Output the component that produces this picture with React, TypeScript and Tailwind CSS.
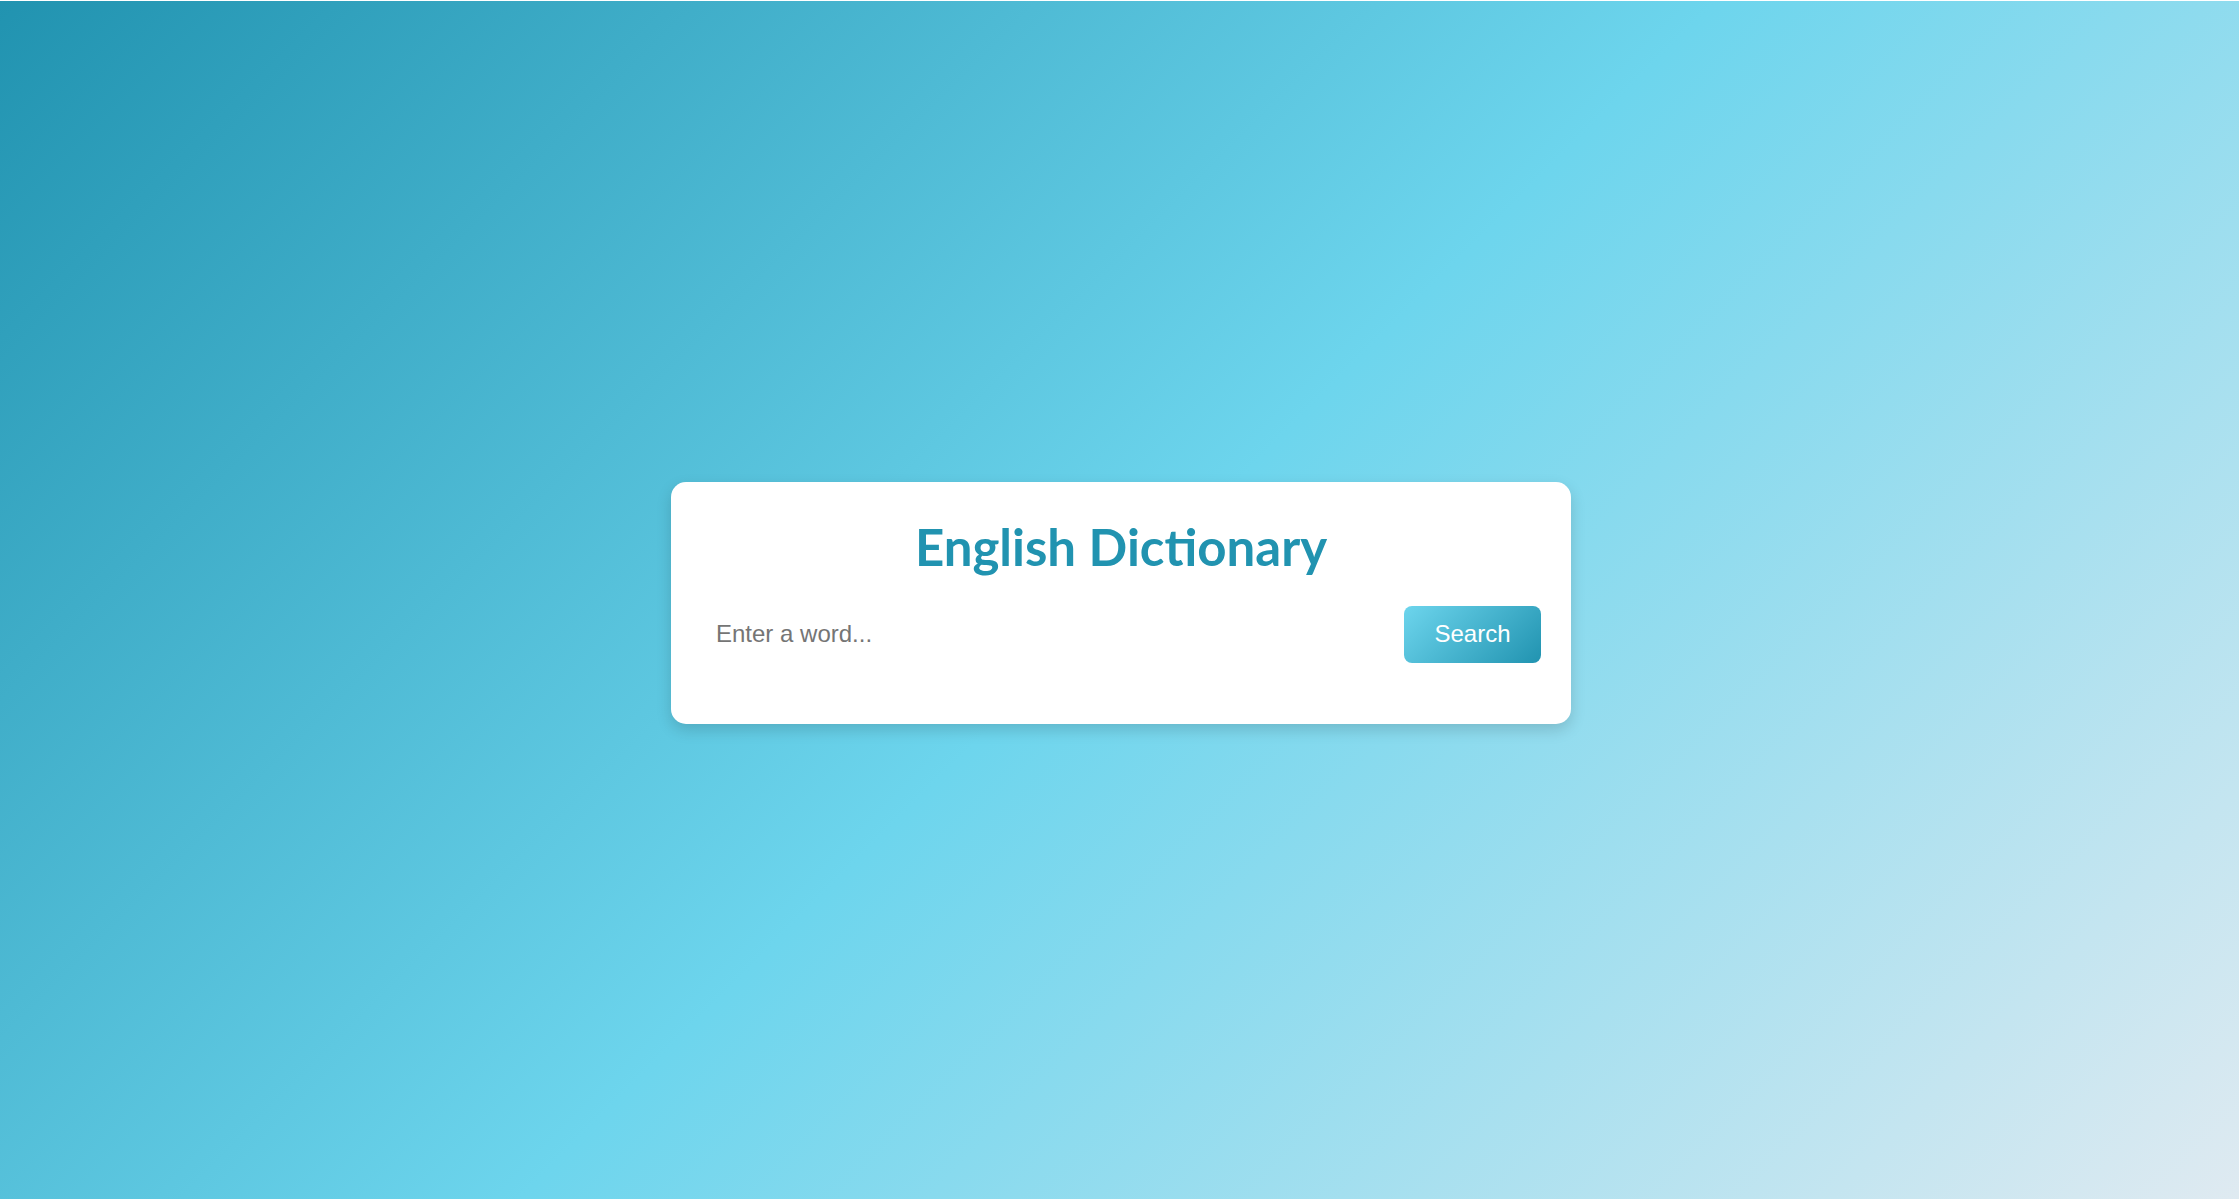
import React from "react";

export default function App() {
  return (
    <div className="w-full h-[1199px] flex flex-col bg-white">
      <div className="h-[1px] w-full bg-white" />
      <div className="flex-1 w-full flex items-center justify-center bg-[linear-gradient(135deg,#2193b0_0%,#6dd5ed_50%,#dfeaf1_100%)]">
        <div className="w-[900px] h-[242px] mt-[5px] ml-[3px] bg-white rounded-[15px] shadow-[0_6px_15px_rgba(0,0,0,0.15)] p-[30px] flex flex-col">
          <h1 className="text-center text-[51px] leading-[70px] font-bold text-[#2193b0] m-0 font-['Lato','Open_Sans',sans-serif]">
            English Dictionary
          </h1>
          <div className="mt-[24px] flex items-center gap-[15px]">
            <input
              type="text"
              placeholder="Enter a word..."
              className="flex-1 h-[57px] px-[15px] text-[24px] border-none outline-none bg-white placeholder:text-[#757575] text-[#333] font-['Liberation_Sans',Arial,sans-serif]"
            />
            <button className="h-[57px] w-[137px] rounded-[8px] text-white text-[24px] bg-[linear-gradient(135deg,#6dd5ed,#2193b0)] font-['Liberation_Sans',Arial,sans-serif]">
              Search
            </button>
          </div>
        </div>
      </div>
    </div>
  );
}
